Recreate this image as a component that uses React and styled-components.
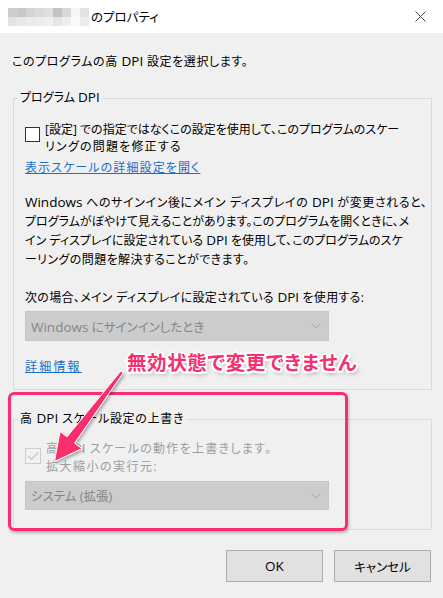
import React from 'react'
import styled, { createGlobalStyle } from 'styled-components'

const GlobalStyle = createGlobalStyle`
    html, body {
        margin: 0;
        padding: 0;
        background: #f0f0f0;
    }
    body {
        font-family: "Open Sans", "Noto Sans CJK JP", sans-serif;
        font-size: 12px;
        color: #000;
        font-feature-settings: "palt";
    }
`;

const Window = styled.div`
    position: relative;
    width: 443px;
    height: 598px;
    overflow: hidden;
    background: #f0f0f0;
`;

const TitleBar = styled.div`
    height: 33px;
    background: #fff;
    display: flex;
    align-items: center;
    padding-left: 8px;
    box-sizing: border-box;
`;

const Title = styled.span`
    margin-left: 2px;
    font-size: 12.5px;
`;

const CloseButton = styled.div`
    margin-left: auto;
    width: 46px;
    height: 33px;
    display: flex;
    align-items: center;
    justify-content: center;
`;

const Body = styled.div`
    padding: 0 11px 0 13px;
`;

const Latin = styled.span`
    font-family: "Open Sans", sans-serif;
    font-size: 13.5px;
    line-height: 1;
    letter-spacing: 0;
`;

const Line = styled.span`
    display: block;
    letter-spacing: ${p => p.$ls || 0}px;
`;

const Intro = styled.p`
    margin: 20px 0 0 -1px;
    line-height: 18px;
    letter-spacing: 0.6px;
`;

const Group = styled.fieldset`
    margin: ${p => p.$top}px 0 0 0;
    padding: ${p => p.$padTop}px 11px ${p => p.$padBottom}px 11px;
    border: 1px solid #dcdcdc;
    min-width: 0;
`;

const Legend = styled.legend`
    margin-left: -7px;
    padding: 0 2px;
    line-height: 16px;
    color: #000;
    letter-spacing: ${p => p.$ls || 0}px;
`;

const CheckRow = styled.div`
    display: flex;
    align-items: flex-start;
    gap: 5px;
`;

const Box = styled.div`
    flex: none;
    width: ${p => p.$size}px;
    height: ${p => p.$size}px;
    margin-top: ${p => p.$offset}px;
    box-sizing: border-box;
    border: 1px solid ${p => p.$disabled ? '#cccccc' : '#333333'};
    background: ${p => p.$disabled ? '#f2f2f2' : '#ffffff'};
    display: flex;
    align-items: center;
    justify-content: center;
`;

const CheckText = styled.div`
    line-height: ${p => p.$lh}px;
    color: ${p => p.$disabled ? '#9d9d9d' : '#000'};
    white-space: nowrap;
`;

const Link = styled.a`
    display: block;
    margin-top: ${p => p.$top}px;
    line-height: 17px;
    color: #1a6fc9;
    text-decoration: underline;
    width: fit-content;
    letter-spacing: ${p => p.$ls || 0}px;
`;

const Paragraph = styled.div`
    margin: ${p => p.$top}px 0 0 0;
    line-height: ${p => p.$lh}px;
    white-space: nowrap;
    letter-spacing: ${p => p.$ls || 0}px;
`;

const Select = styled.div`
    margin-top: 5px;
    width: 304px;
    height: ${p => p.$h}px;
    box-sizing: border-box;
    background: #cccccc;
    border: 1px solid #c6c6c6;
    display: flex;
    align-items: center;
    padding: 0 7px 0 5px;
    color: #858585;
    font-size: 12.5px;
`;

const SelectText = styled.span`
    flex: 1;
`;

const Footer = styled.div`
    margin-top: 20px;
    display: flex;
    justify-content: flex-end;
    gap: 11px;
    padding-right: 1px;
`;

const Button = styled.button`
    width: 97px;
    height: 32px;
    background: #e1e1e1;
    border: 1px solid #adadad;
    font-family: inherit;
    font-size: 12.5px;
    color: #000;
    font-feature-settings: "palt";
`;

const Mosaic = styled.svg`
    display: block;
    flex: none;
`;

const Callout = styled.div`
    position: absolute;
    left: 127px;
    top: 350px;
    font-family: "Noto Sans CJK JP", sans-serif;
    font-size: 19.5px;
    font-weight: 700;
    line-height: 24px;
    color: #f4306f;
    letter-spacing: 0.6px;
    text-shadow:
        -2px 0 0 #fff, 2px 0 0 #fff, 0 -2px 0 #fff, 0 2px 0 #fff,
        -1.5px -1.5px 0 #fff, 1.5px 1.5px 0 #fff, -1.5px 1.5px 0 #fff, 1.5px -1.5px 0 #fff,
        2px 3px 4px rgba(0, 0, 0, 0.35);
`;

const Highlight = styled.div`
    position: absolute;
    left: 8px;
    top: 392px;
    width: 340px;
    height: 139px;
    box-sizing: border-box;
    border: 3px solid #fb2d6c;
    border-radius: 6px;
    box-shadow: 1px 2px 3px rgba(0, 0, 0, 0.25);
    pointer-events: none;
`;

const Overlay = styled.svg`
    position: absolute;
    left: 0;
    top: 0;
    pointer-events: none;
`;

const mosaicTop = ['#cdcdcd', '#c8c8c8', '#d6d2ce', '#dadada', '#dfdfdf', '#c3c3c3', '#d9d9d9', '#f7f7f7', '#e3e3e3'];
const mosaicBottom = ['#e3e3e3', '#e8e8e8', '#ebebeb', '#ededed', '#efefef', '#e5e5e5', '#ededed', '#fbfbfb', '#ededed'];

const Chevron = () => (
    <svg width="10" height="6" viewBox="0 0 10 6">
        <path d="M0.5 0.5 L5 5 L9.5 0.5" fill="none" stroke="#a8a8a8" strokeWidth="1" />
    </svg>
)

export default () => {
    return (
        <Window>
            <GlobalStyle />
            <TitleBar>
                <Mosaic width="81" height="18" viewBox="0 0 81 18">
                    {mosaicTop.map((c, i) => <rect key={'t' + i} x={i * 9} y="0" width="9" height="9" fill={c} />)}
                    {mosaicBottom.map((c, i) => <rect key={'b' + i} x={i * 9} y="9" width="9" height="9" fill={c} />)}
                </Mosaic>
                <Title>のプロパティ</Title>
                <CloseButton>
                    <svg width="11" height="11" viewBox="0 0 11 11">
                        <path d="M0.5 0.5 L10.5 10.5 M10.5 0.5 L0.5 10.5" stroke="#444" strokeWidth="1" />
                    </svg>
                </CloseButton>
            </TitleBar>
            <Body>
                <Intro>このプログラムの高 <Latin>DPI</Latin> 設定を選択します。</Intro>

                <Group $top={19} $padTop={15} $padBottom={14}>
                    <Legend>プログラム <Latin>DPI</Latin></Legend>
                    <CheckRow>
                        <Box $size={15} $offset={6} />
                        <CheckText $lh={17}>
                            <Line>[設定] での指定ではなくこの設定を使用して、このプログラムのスケー</Line>
                            <Line $ls={1.2}>リングの問題を修正する</Line>
                        </CheckText>
                    </CheckRow>
                    <Link $top={4} $ls={1.1}>表示スケールの詳細設定を開く</Link>
                    <Paragraph $top={17} $lh={19}>
                        <Line $ls={0.6}><Latin>Windows</Latin> へのサインイン後にメイン ディスプレイの <Latin>DPI</Latin> が変更されると、</Line>
                        <Line>プログラムがぼやけて見えることがあります。このプログラムを開くときに、メ</Line>
                        <Line>イン ディスプレイに設定されている <Latin>DPI</Latin> を使用して、このプログラムのスケ</Line>
                        <Line $ls={0.4}>ーリングの問題を解決することができます。</Line>
                    </Paragraph>
                    <Paragraph $top={20} $lh={17} $ls={0.3}>
                        次の場合、メイン ディスプレイに設定されている <Latin>DPI</Latin> を使用する:
                    </Paragraph>
                    <Select $h={30}>
                        <SelectText><Latin>Windows</Latin> にサインインしたとき</SelectText>
                        <Chevron />
                    </Select>
                    <Link $top={17} $ls={2.2}>詳細情報</Link>
                </Group>

                <Group $top={21} $padTop={13} $padBottom={19}>
                    <Legend $ls={0.7}>高 <Latin>DPI</Latin> スケール設定の上書き</Legend>
                    <CheckRow>
                        <Box $size={16} $offset={8} $disabled>
                            <svg width="12" height="10" viewBox="0 0 12 10">
                                <path d="M1 5 L4.5 8.5 L11 1.5" fill="none" stroke="#c4c4c4" strokeWidth="1.2" />
                            </svg>
                        </Box>
                        <CheckText $lh={18} $disabled>
                            <Line $ls={1.3}>高 <Latin>DPI</Latin> スケールの動作を上書きします。</Line>
                            <Line $ls={1.5}>拡大縮小の実行元:</Line>
                        </CheckText>
                    </CheckRow>
                    <Select $h={29}>
                        <SelectText>システム (拡張)</SelectText>
                        <Chevron />
                    </Select>
                </Group>

                <Footer>
                    <Button><Latin>OK</Latin></Button>
                    <Button>キャンセル</Button>
                </Footer>
            </Body>

            <Highlight />
            <Overlay width="443" height="598" viewBox="0 0 443 598">
                <defs>
                    <filter id="arrowShadow" x="-20%" y="-20%" width="140%" height="140%">
                        <feDropShadow dx="1.5" dy="2" stdDeviation="1.5" floodColor="#000" floodOpacity="0.3" />
                    </filter>
                </defs>
                <polygon
                    points="123.2,372.9 74.6,443.2 82,448.6 54.5,461.5 60,431.6 67,436.8 120.8,371.1"
                    fill="#fb2d6c"
                    stroke="#fff"
                    strokeWidth="1"
                    strokeLinejoin="round"
                    filter="url(#arrowShadow)"
                />
            </Overlay>
            <Callout>無効状態で変更できません</Callout>
        </Window>
    )
}
